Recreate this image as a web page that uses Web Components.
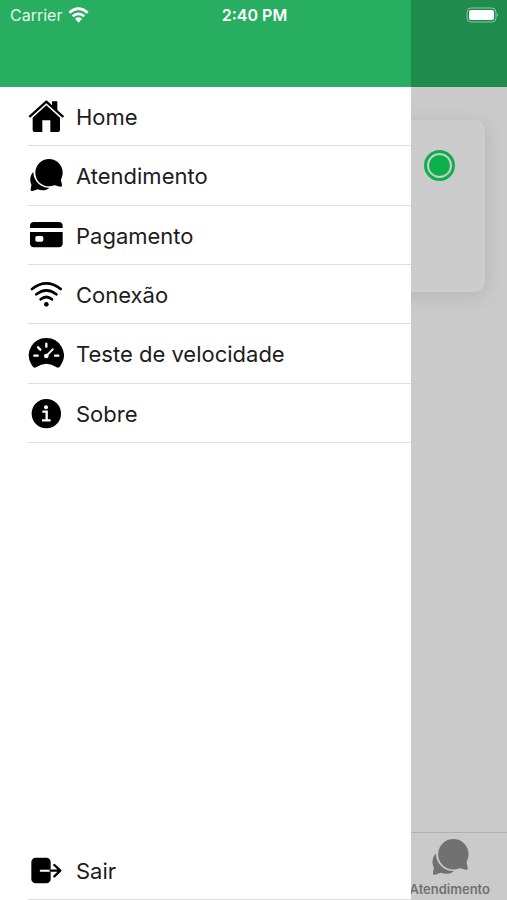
<!DOCTYPE html>
<html lang="pt-BR">
<head>
<meta charset="utf-8">
<meta name="viewport" content="width=device-width, initial-scale=1">
<title>Menu</title>
<style>
    :root {
        --theme-colour: #27ae60;
        --line-colour: #dedede;
    }
    body {
        margin: 0;
        font-family: Inter, Roboto, sans-serif;
        color: #1c1c1e;
    }
</style>
</head>
<body>

<app-screen>
    <status-bar slot="status" carrier="Carrier" time="2:40 PM"></status-bar>

    <status-card></status-card>

    <tab-item slot="tabs" icon="chat">Atendimento</tab-item>

    <side-drawer slot="drawer">
        <menu-item icon="home">Home</menu-item>
        <menu-item icon="chat">Atendimento</menu-item>
        <menu-item icon="card">Pagamento</menu-item>
        <menu-item icon="wifi">Conexão</menu-item>
        <menu-item icon="gauge">Teste de velocidade</menu-item>
        <menu-item icon="info">Sobre</menu-item>
        <menu-item slot="footer" icon="exit">Sair</menu-item>
    </side-drawer>
</app-screen>

<script>
// all icons share a 108 x 108 grid
const icons = {
    home: `
        <path d="M72 7h16v30l-16-16z"/>
        <path d="M6 52 55 8l49 44" fill="none" stroke="currentColor" stroke-width="7" stroke-linejoin="round" stroke-linecap="round"/>
        <path d="M55 19 96 56v37q0 6-6 6H67V64H43v35H20q-6 0-6-6V56z"/>`,
    chat: `
        <path d="M16 42C7 51 4 66 10 79c1 4-2 10-2 16 0 4 2 5 6 4l15-5c13 5 27 3 36-5C41 91 16 71 16 42z"/>
        <path d="M63 3a41 41 0 1 1 0 82C40 85 22 67 22 44A41 41 0 0 1 63 3z"/>
        <path d="M99 62c-1 6 3 14 3 20 0 4-2 5-6 4l-18-5z"/>`,
    card: `
        <path d="M6 30V24q0-12 12-12h74q12 0 12 12v6z"/>
        <path fill-rule="evenodd" d="M6 42h98v34q0 12-12 12H18Q6 88 6 76zM27 54q-5 0-5 5v7q0 5 5 5h14q5 0 5-5v-7q0-5-5-5z"/>`,
    wifi: `
        <g fill="none" stroke="currentColor" stroke-width="8" stroke-linecap="round">
            <path d="M12 36q43-34 86 0"/>
            <path d="M25 52q30-24 60 0"/>
            <path d="M38 67q17-14 34 0"/>
        </g>
        <circle cx="55" cy="82" r="7"/>`,
    gauge: `
        <path d="M55 6a52 52 0 0 1 45 79q-7 14-14 9-31-21-62 0-7 5-14-9A52 52 0 0 1 55 6z"/>
        <g fill="none" stroke="#fff" stroke-width="7" stroke-linecap="round">
            <path d="M19 59h10M81 59h10M55 23v9M30 34l7 7"/>
            <path d="M56 59l18-19" stroke-width="6"/>
        </g>
        <circle cx="55" cy="60" r="7" fill="#fff"/>`,
    info: `
        <circle cx="55" cy="53" r="44"/>
        <circle cx="54" cy="34" r="6" fill="#fff"/>
        <path d="M43 47h13v25M42 73h26" fill="none" stroke="#fff" stroke-width="7"/>`,
    exit: `
        <rect x="10" y="14" width="58" height="77" rx="13"/>
        <path d="M38 53h30" stroke="#fff" stroke-width="6" stroke-linecap="round"/>
        <path d="M68 53h28M79 36l18 17-18 17" fill="none" stroke="currentColor" stroke-width="7" stroke-linecap="round" stroke-linejoin="round"/>`
}

function svgIcon(name) {
    return `<svg viewBox="0 0 108 108" fill="currentColor" aria-hidden="true">${icons[name] || ''}</svg>`
}

/**
 * the whole screen: header, content and tabs below,
 * the drawer and its scrim above them
 */
class AppScreen extends HTMLElement {
    constructor() {
        super()
        this.attachShadow({mode: 'open'})
        this.shadowRoot.innerHTML = `
            <style>
                :host {
                    display: flex;
                    flex-direction: column;
                    position: relative;
                    min-height: 100vh;
                    background: #fdfdfd;
                    overflow: hidden;
                }
                header {
                    height: 87px;
                    background: var(--theme-colour);
                }
                main {
                    flex: 1;
                    padding: 33px 22px;
                }
                nav {
                    display: flex;
                    justify-content: flex-end;
                    padding: 5px 17px 3px 0;
                    border-top: 1px solid #dcdcdc;
                }
                .scrim {
                    position: absolute;
                    inset: 0;
                    background: rgba(0, 0, 0, 0.2);
                }
                slot[name=drawer]::slotted(*) {
                    position: absolute;
                    inset: 0 auto 0 0;
                    width: 81%;
                }
                slot[name=status]::slotted(*) {
                    position: absolute;
                    inset: 0 0 auto 0;
                }
            </style>
            <header></header>
            <main><slot></slot></main>
            <nav><slot name="tabs"></slot></nav>
            <div class="scrim"></div>
            <slot name="drawer"></slot>
            <slot name="status"></slot>
        `
    }
}

class StatusBar extends HTMLElement {
    constructor() {
        super()
        this.attachShadow({mode: 'open'})
    }

    connectedCallback() {
        this.shadowRoot.innerHTML = `
            <style>
                :host {
                    display: grid;
                    grid-template-columns: 1fr auto 1fr;
                    align-items: center;
                    height: 29px;
                    padding: 0 8px 0 10px;
                    color: #fff;
                    font-size: 16px;
                }
                .carrier {
                    display: flex;
                    align-items: center;
                    gap: 6px;
                    color: #e4f6eb;
                }
                .time {
                    font-weight: 600;
                }
                .battery {
                    justify-self: end;
                }
                svg {
                    display: block;
                }
            </style>
            <div class="carrier">
                <span>${this.getAttribute('carrier')}</span>
                <svg width="21" height="16" viewBox="0 0 63 48" fill="none" stroke="#fff" stroke-width="8">
                    <path d="M4 17q27-24 55 0M14 28q17-15 35 0"/>
                    <path d="M21 35q10-8 21 0L32 47z" fill="#fff" stroke="none"/>
                </svg>
            </div>
            <div class="time">${this.getAttribute('time')}</div>
            <svg class="battery" width="33" height="16" viewBox="0 0 33 16">
                <rect x="1" y="1" width="29" height="14" rx="4" fill="none" stroke="#8cc5a3"/>
                <rect x="3" y="3" width="25" height="10" rx="2" fill="#fff"/>
                <path d="M31 6q2 2 0 4z" fill="#8cc5a3"/>
            </svg>
        `
    }
}

class StatusCard extends HTMLElement {
    constructor() {
        super()
        this.attachShadow({mode: 'open'})
        this.shadowRoot.innerHTML = `
            <style>
                :host {
                    display: flex;
                    justify-content: flex-end;
                    align-items: flex-start;
                    box-sizing: border-box;
                    min-height: 172px;
                    padding: 30px;
                    border-radius: 10px;
                    background: #fff;
                    box-shadow: 2px 4px 18px rgba(0, 0, 0, 0.1);
                }
                .dot {
                    box-sizing: border-box;
                    width: 31px;
                    height: 31px;
                    padding: 2px;
                    border: 3px solid #10dd5e;
                    border-radius: 50%;
                    background: #10dd5e content-box;
                }
            </style>
            <div class="dot"></div>
        `
    }
}

class TabItem extends HTMLElement {
    constructor() {
        super()
        this.attachShadow({mode: 'open'})
    }

    connectedCallback() {
        this.shadowRoot.innerHTML = `
            <style>
                :host {
                    display: block;
                }
                a {
                    display: flex;
                    flex-direction: column;
                    align-items: center;
                    gap: 3px;
                    color: #8e8e8e;
                    font-size: 13px;
                    font-weight: 600;
                    line-height: 16px;
                    text-decoration: none;
                }
                svg {
                    width: 40px;
                    height: 40px;
                }
            </style>
            <a href="#atendimento">${svgIcon(this.getAttribute('icon'))}<slot></slot></a>
        `
    }
}

class SideDrawer extends HTMLElement {
    constructor() {
        super()
        this.attachShadow({mode: 'open'})
        this.shadowRoot.innerHTML = `
            <style>
                :host {
                    display: flex;
                    flex-direction: column;
                    background: #fff;
                }
                header {
                    height: 87px;
                    background: var(--theme-colour);
                }
                nav {
                    display: grid;
                    grid-auto-rows: 1fr;
                    min-height: 356px;
                }
                footer {
                    margin-top: auto;
                }
            </style>
            <header></header>
            <nav><slot></slot></nav>
            <footer><slot name="footer"></slot></footer>
        `
    }
}

class MenuItem extends HTMLElement {
    constructor() {
        super()
        this.attachShadow({mode: 'open'})
    }

    connectedCallback() {
        this.shadowRoot.innerHTML = `
            <style>
                :host {
                    display: grid;
                    min-height: 59px;
                    margin-left: 28px;
                }
                button {
                    display: flex;
                    align-items: center;
                    gap: 12px;
                    padding: 2px 0 0;
                    border: none;
                    border-bottom: 1px solid var(--line-colour);
                    background: none;
                    color: inherit;
                    font: inherit;
                    font-size: 22px;
                    text-align: left;
                    cursor: pointer;
                }
                svg {
                    width: 36px;
                    height: 36px;
                    color: #000;
                }
            </style>
            <button type="button">${svgIcon(this.getAttribute('icon'))}<slot></slot></button>
        `
    }
}

window.customElements.define('app-screen', AppScreen)
window.customElements.define('status-bar', StatusBar)
window.customElements.define('status-card', StatusCard)
window.customElements.define('tab-item', TabItem)
window.customElements.define('side-drawer', SideDrawer)
window.customElements.define('menu-item', MenuItem)
</script>
</body>
</html>
